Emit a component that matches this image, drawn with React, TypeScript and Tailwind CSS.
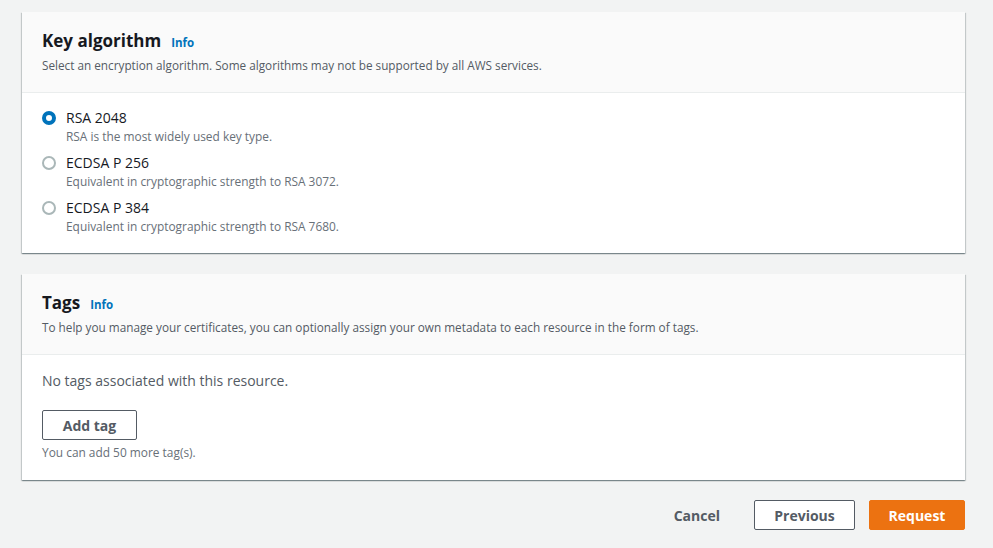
import React from "react";

const font = { fontFamily: '"Open Sans", "Noto Sans", Arial, sans-serif' };

function Radio({ checked }: { checked: boolean }) {
  return checked ? (
    <span className="mt-[3px] box-border inline-block h-[14px] w-[14px] shrink-0 rounded-full border-[4px] border-[#0073bb] bg-white" />
  ) : (
    <span className="mt-[3px] box-border inline-block h-[14px] w-[14px] shrink-0 rounded-full border-2 border-[#aab7b8] bg-white" />
  );
}

function Card({ title, desc, children }: { title: string; desc: string; children: React.ReactNode }) {
  return (
    <div className="bg-white shadow-[0_1px_1px_0_rgba(0,28,36,0.3),1px_1px_1px_0_rgba(0,28,36,0.15),-1px_1px_1px_0_rgba(0,28,36,0.15)]">
      <div className="border-b border-[#eaeded] bg-[#fafafa] px-5 pt-[18px] pb-[19px]">
        <div className="flex items-baseline gap-[10px]">
          <h2 className="text-[17px] font-bold leading-[22px] text-[#16191f]">{title}</h2>
          <span className="text-[11.5px] font-bold text-[#0073bb]">Info</span>
        </div>
        <p className="mt-[5px] text-[11.75px] leading-4 text-[#545b64]">{desc}</p>
      </div>
      {children}
    </div>
  );
}

export default function App() {
  const opts = [
    { l: "RSA 2048", d: "RSA is the most widely used key type.", c: true },
    { l: "ECDSA P 256", d: "Equivalent in cryptographic strength to RSA 3072.", c: false },
    { l: "ECDSA P 384", d: "Equivalent in cryptographic strength to RSA 7680.", c: false },
  ];
  return (
    <div style={font} className="min-h-[548px] bg-[#f2f3f3] pl-[22px] pr-[28px] pt-3">
      <Card title="Key algorithm" desc="Select an encryption algorithm. Some algorithms may not be supported by all AWS services.">
        <div className="flex flex-col gap-[9px] px-5 pt-[15px] pb-[19px]">
          {opts.map((o) => (
            <div key={o.l} className="flex gap-[10px]">
              <Radio checked={o.c} />
              <div>
                <div className="text-[14px] leading-5 text-[#16191f]">{o.l}</div>
                <div className="text-[11.9px] leading-4 text-[#687078]">{o.d}</div>
              </div>
            </div>
          ))}
        </div>
      </Card>
      <div className="h-[21px]" />
      <Card title="Tags" desc="To help you manage your certificates, you can optionally assign your own metadata to each resource in the form of tags.">
        <div className="px-5 pt-[16px] pb-[20px]">
          <p className="text-[14px] leading-5 text-[#545b64]">No tags associated with this resource.</p>
          <button className="mt-[19px] h-[30px] w-[95px] rounded-[2px] border border-[#545b64] bg-white text-[14px] font-bold text-[#545b64]">
            Add tag
          </button>
          <p className="mt-1 text-[11.9px] leading-4 text-[#687078]">You can add 50 more tag(s).</p>
        </div>
      </Card>
      <div className="mt-5 flex items-center justify-end">
        <button className="mr-[34px] text-[14px] font-bold text-[#545b64]">Cancel</button>
        <button className="h-[30px] w-[101px] rounded-[2px] border border-[#545b64] bg-white text-[14px] font-bold text-[#545b64]">
          Previous
        </button>
        <button className="ml-[14px] h-[30px] w-[96px] rounded-[2px] border border-[#ec7211] bg-[#ec7211] text-[14px] font-bold text-white">
          Request
        </button>
      </div>
    </div>
  );
}
